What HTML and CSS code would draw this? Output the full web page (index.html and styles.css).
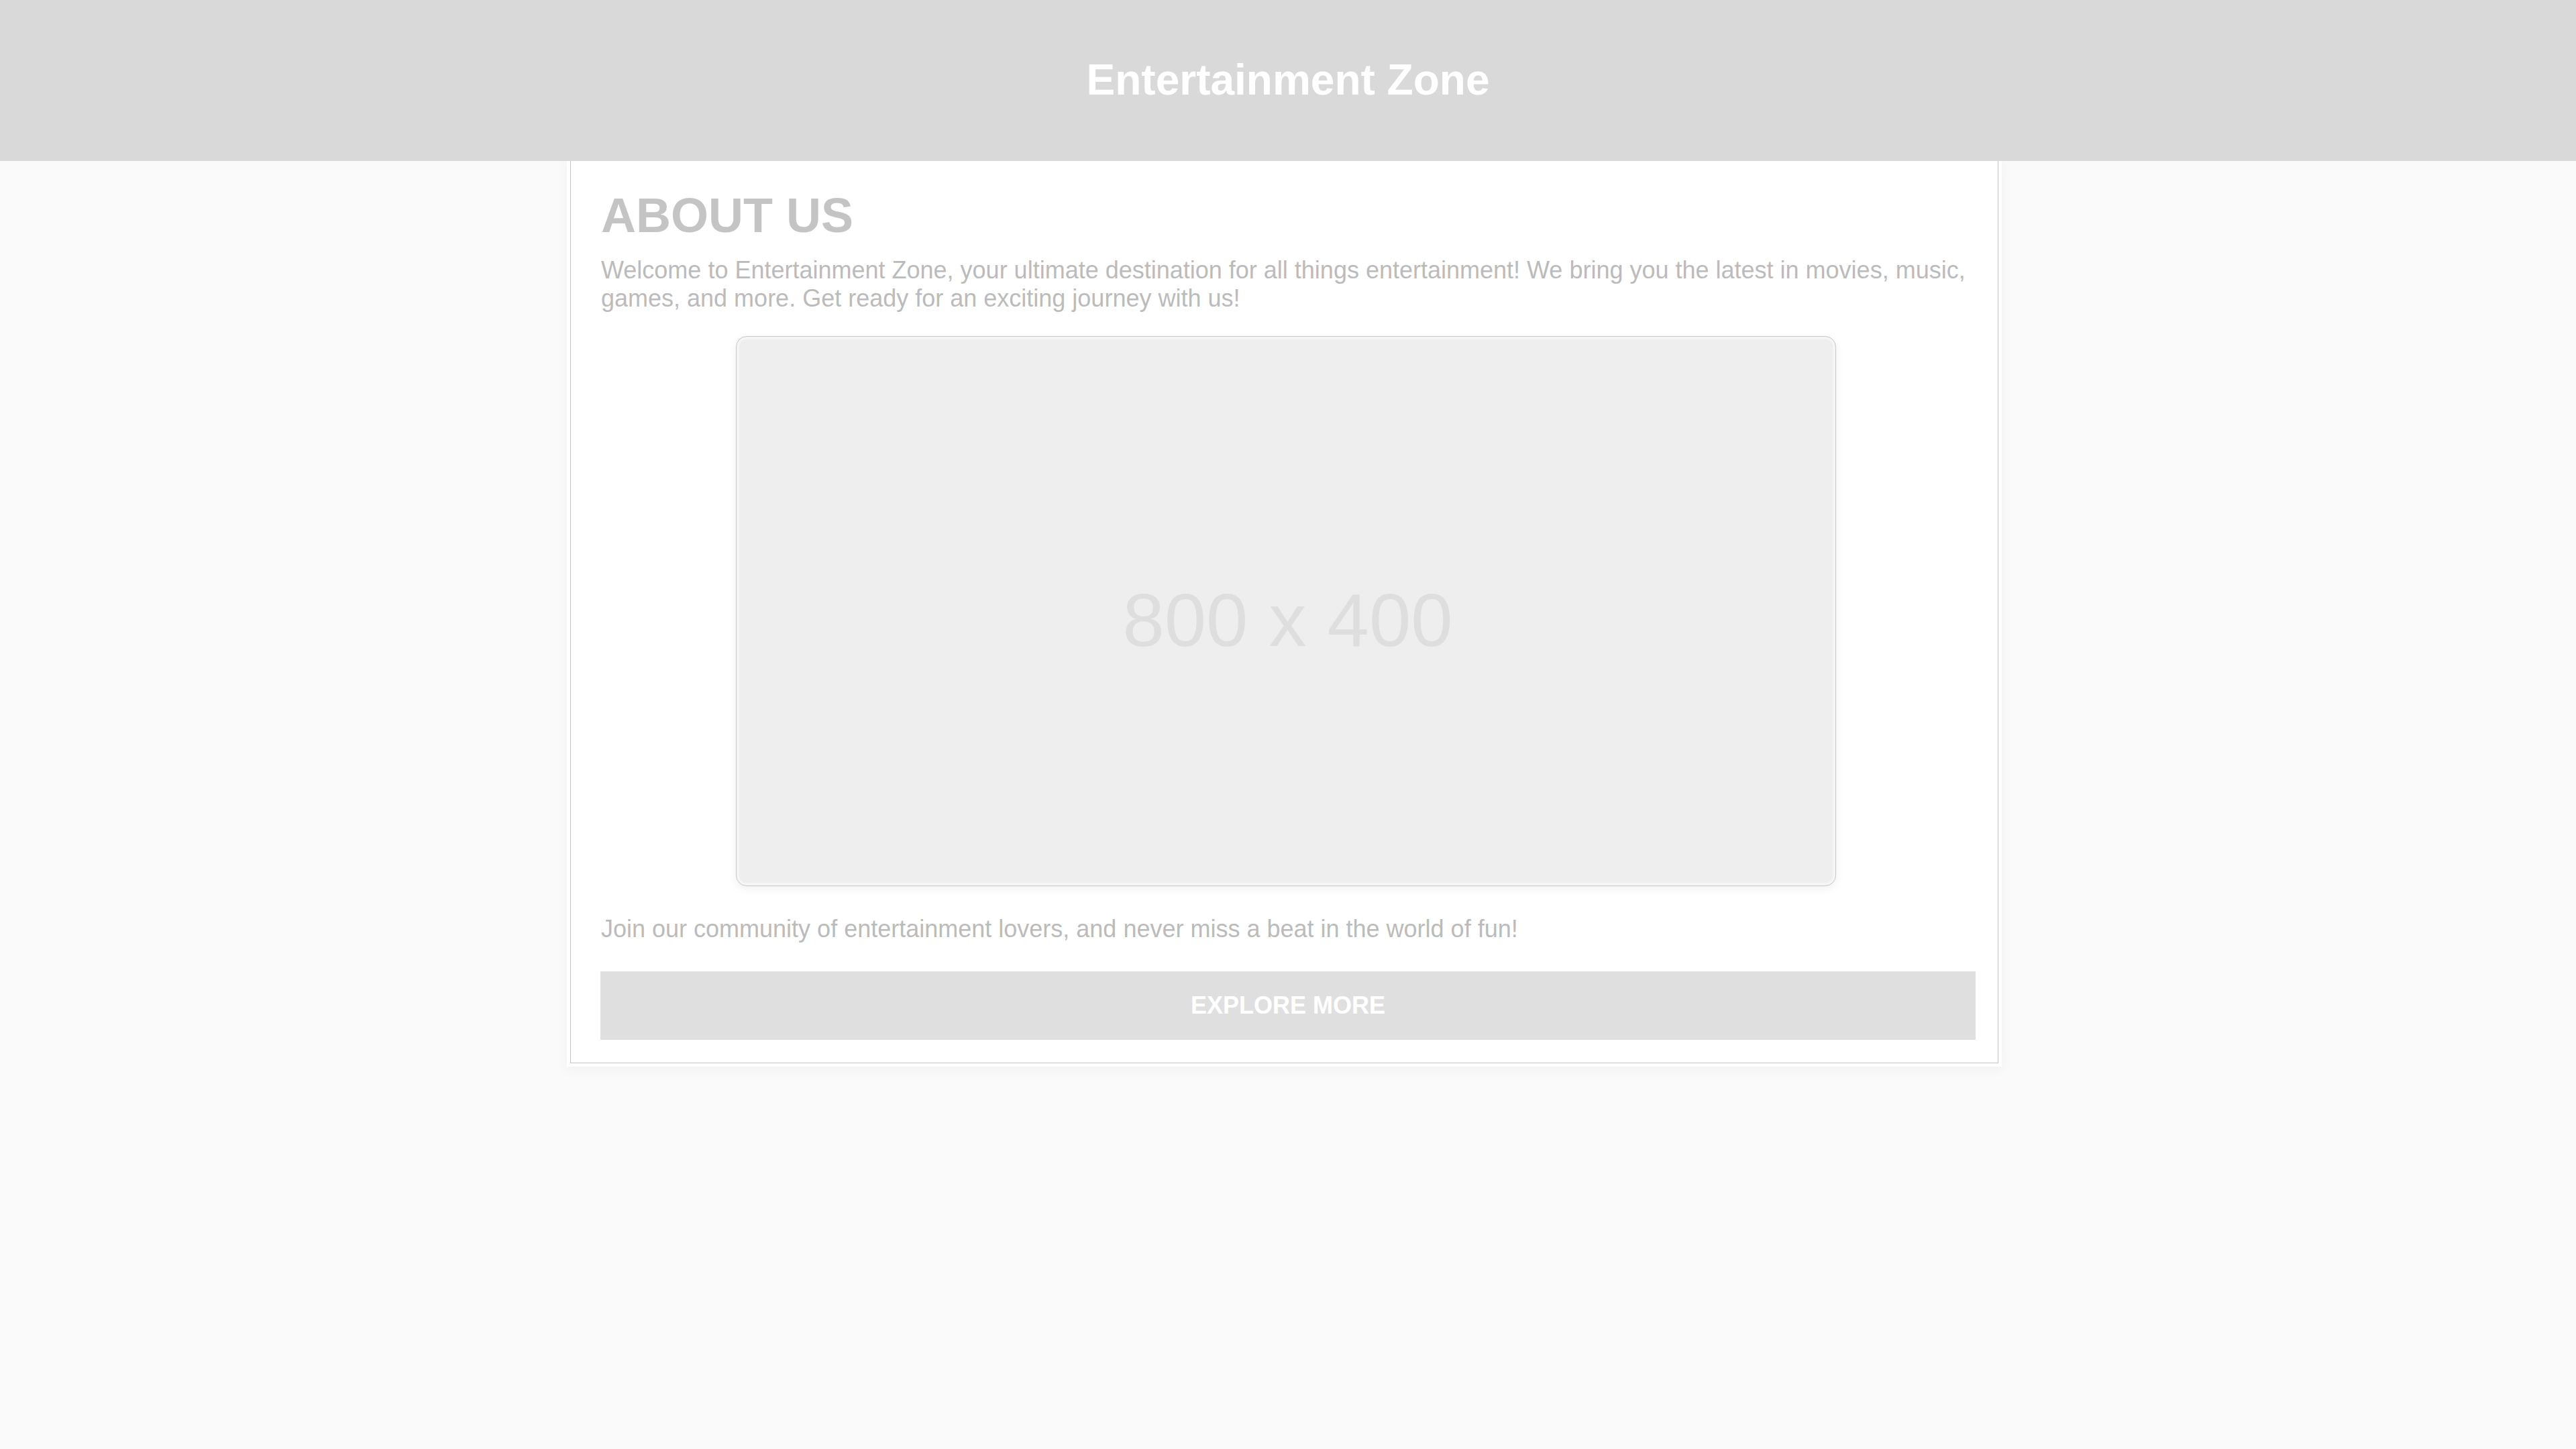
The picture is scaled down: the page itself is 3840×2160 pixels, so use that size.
FILE: index.html
```html
<!DOCTYPE html>
<html lang="en">
<head>
<meta charset="utf-8">
<title>Entertainment Zone</title>
<link rel="stylesheet" href="styles.css">
</head>
<body>
<header class="site-header">
  <h1 class="site-title">Entertainment Zone</h1>
</header>
<main class="page">
  <section class="card">
    <h2 class="card-title">ABOUT US</h2>
    <p class="card-text intro">Welcome to Entertainment Zone, your ultimate destination for all things entertainment! We bring you the latest in movies, music, games, and more. Get ready for an exciting journey with us!</p>
    <div class="placeholder"><span class="placeholder-label">800 x 400</span></div>
    <p class="card-text outro">Join our community of entertainment lovers, and never miss a beat in the world of fun!</p>
    <button class="cta" type="button">EXPLORE MORE</button>
  </section>
</main>
</body>
</html>
```
FILE: styles.css
```css
* { box-sizing: border-box; }

html, body {
  margin: 0;
  padding: 0;
}

body {
  background: #fafafa;
  font-family: "Liberation Sans", Arial, sans-serif;
  min-height: 2160px;
}

.site-header {
  height: 240px;
  background: #d9d9d9;
  display: flex;
  align-items: center;
  justify-content: center;
  position: relative;
  z-index: 1;
}

.site-title {
  margin: 0;
  font-size: 64px;
  font-weight: bold;
  color: #ffffff;
  line-height: 1.15;
}

.page {
  display: flex;
  justify-content: center;
}

.card {
  width: 2129px;
  margin-right: 11px;
  background: #ffffff;
  border: 1px solid #c4c4c4;
  border-top: none;
  padding: 40px 44px 34px 45px;
  box-shadow: 0 0 0 5px #ffffff, 0 4px 18px 6px rgba(0, 0, 0, 0.04);
  display: flex;
  flex-direction: column;
}

.card-title {
  margin: 0;
  font-size: 72px;
  font-weight: bold;
  color: #c4c4c4;
  line-height: normal;
}

.card-text {
  margin: 0;
  font-size: 36px;
  line-height: normal;
  color: #bbbbbb;
}

.intro {
  margin-top: 20px;
}

.placeholder {
  align-self: center;
  width: 1640px;
  height: 820px;
  margin-top: 35px;
  margin-left: 3px;
  border: 1px solid #c8c8c8;
  border-radius: 16px;
  background: #eeeeee;
  box-shadow: inset 0 0 0 4px #f5f5f5, 0 4px 14px rgba(0, 0, 0, 0.06);
  display: flex;
  align-items: center;
  justify-content: center;
}

.placeholder-label {
  font-size: 112px;
  color: #dedede;
  line-height: 1;
  margin-top: 28px;
  margin-left: 6px;
}

.outro {
  margin-top: 43px;
}

.cta {
  margin-top: 42px;
  margin-left: -1px;
  width: calc(100% + 12px);
  height: 102px;
  border: none;
  border-radius: 0;
  background: #dfdfdf;
  color: #ffffff;
  font-family: "Liberation Sans", Arial, sans-serif;
  font-size: 36px;
  font-weight: bold;
  padding: 0;
}
```
